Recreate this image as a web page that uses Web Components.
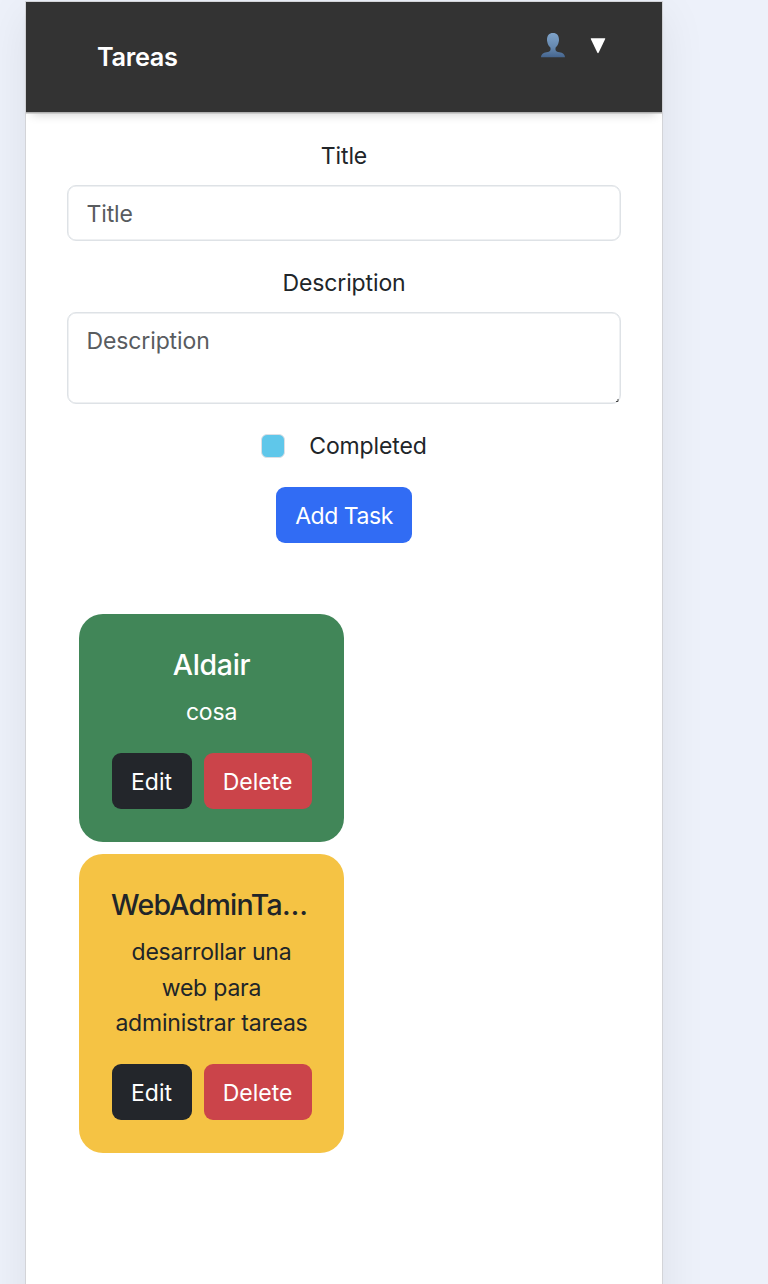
<!DOCTYPE html>
<html lang="es">
<head>
<meta charset="utf-8">
<title>Tareas</title>
<style>
html,body{margin:0;height:100%}
body{background:#edf1fa;color:#212529;font:400 23px/35.5px Inter,"Liberation Sans",sans-serif;letter-spacing:-.12px;overflow:hidden}
</style>
</head>
<body>
<task-app></task-app>

<template id="t-app"><style>
:host{display:block;box-sizing:border-box;height:1284px;overflow:hidden;padding:1px 0 0 25px}
.page{box-sizing:border-box;width:638px;height:1340px;background:#fff;border:1px solid #d3d4d8;box-shadow:0 12px 44px rgba(0,0,0,.075)}
.list{display:flex;flex-direction:column;gap:12px;padding:71px 0 0 53px}
</style>
<div class="page">
<task-header>Tareas</task-header>
<task-form></task-form>
<div class="list">
<task-card style="--bg:#418658;--fg:#fff"><span slot="title">Aldair</span>cosa</task-card>
<task-card style="--bg:#f5c344;--fg:#212529;--title-spacing:-.75px"><span slot="title">WebAdminTareas</span>desarrollar una web para administrar tareas</task-card>
</div>
</div></template>

<template id="t-header"><style>
:host{display:flex;justify-content:space-between;box-sizing:border-box;height:110px;padding:0 56.500px 0 71px;background:#333;color:#fff;box-shadow:0 1.500px 0 #b0b0b0,0 8px 10px -6px rgba(0,0,0,.2)}
h1{margin:37px 0 0;font-size:25.300px;line-height:36px;font-weight:600;letter-spacing:-.3px}
.user{display:flex;gap:24.500px;padding-top:31px;align-items:flex-start}
svg{display:block}
.arrow{margin-top:4px}
</style>
<h1><slot></slot></h1>
<div class="user">
<svg class="person" width="24" height="25" viewBox="0 0 24 25"><defs><linearGradient id="g" x1="0" y1="0" x2="0" y2="1"><stop offset="0" stop-color="#7fa3c9"/><stop offset=".6" stop-color="#6487ae"/><stop offset="1" stop-color="#45658e"/></linearGradient></defs><path fill="url(#g)" d="M12 0C8.1 0 6 2.7 6 6.5c0 .8 0 1.5.2 2.1.4 2.7 1.8 5 3.3 6.1v2c-.2 1.500-1.800 2-4 2.600C2.300 20 .3 21 0 24.300h24c-.3-3.300-2.300-4.300-5.500-5-2.200-.6-3.800-1.100-4-2.600v-2c1.500-1.100 2.900-3.400 3.300-6.100.2-.6.200-1.300.200-2.100C18 2.700 15.900 0 12 0Z"/></svg>
<svg class="arrow" width="16" height="17" viewBox="0 0 16 17"><path fill="#fff" d="M1.200 1.300h13.600q.7 0 .4.700L8.600 15.700q-.6.900-1.200 0L.8 2q-.3-.7.400-.7Z"/></svg>
</div></template>

<template id="t-form"><style>
:host{display:flex;flex-direction:column;align-items:center;padding:27px 41px 0}
label{height:35.500px}
input,textarea{display:block;box-sizing:border-box;width:554px;margin:0;padding:8px 18px 6px 18.500px;border:1.500px solid #dee2e6;border-radius:9px;background:#fff;color:#212529;font:inherit;letter-spacing:inherit;outline:0;resize:none;overflow:hidden;box-shadow:inset 0 0 0 .5px #dee2e6}
::placeholder{color:#595c5f;opacity:1}
input{height:56px;margin:10px 0 25.500px}
.area{position:relative;margin:10px 0 25px}
textarea{height:92px;padding-top:11px}
.grip{position:absolute;right:2px;bottom:2px}
.check{display:flex;align-items:center;gap:24px;height:35.500px;margin-bottom:23px}
.box{box-sizing:border-box;width:24px;height:24px;border:1.500px solid #dcdfe4;border-radius:6px;background:#5fc7ea;margin-top:-1px}
</style>
<label for="a">Title</label><input id="a" placeholder="Title">
<label for="b">Description</label>
<div class="area"><textarea id="b" placeholder="Description"></textarea><svg class="grip" width="3" height="3"><path d="M0 2.500h2V0" fill="none" stroke="#444"/></svg></div>
<div class="check"><span class="box" role="checkbox"></span><span>Completed</span></div>
<task-button style="--c:#316cf4;--w:136px;letter-spacing:-.45px">Add Task</task-button>
</template>

<template id="t-button"><style>
:host{display:block}
button{display:block;width:var(--w);height:56px;margin:0;padding:3px 0 0;border:0;border-radius:9px;background:var(--c);color:#fff;font:inherit;letter-spacing:inherit;white-space:nowrap}
</style><button><slot></slot></button></template>

<template id="t-card"><style>
:host{display:block;box-sizing:border-box;width:265px;padding:33px 32px;border-radius:24px;background:var(--bg);color:var(--fg);text-align:center}
h2{margin:0 0 12.800px;font-size:28.500px;line-height:35.500px;font-weight:460;letter-spacing:var(--title-spacing,-.35px);white-space:nowrap;overflow:hidden;text-overflow:ellipsis}
p{margin:0 0 22.200px;letter-spacing:-.2px}
.actions{display:flex;justify-content:center;gap:12px;letter-spacing:0}
</style><h2><slot name="title"></slot></h2><p><slot></slot></p>
<div class="actions"><task-button style="--c:#23262b;--w:80px">Edit</task-button><task-button style="--c:#cb444a;--w:108px">Delete</task-button></div></template>

<script>
function define(name, id) {
  customElements.define(name, class extends HTMLElement {
    constructor() {
      super();
      this.attachShadow({ mode: 'open' }).append(document.getElementById(id).content.cloneNode(true));
    }
  });
}
define('task-button', 't-button');
define('task-header', 't-header');
define('task-form', 't-form');
define('task-card', 't-card');
define('task-app', 't-app');
</script>
</body>
</html>
